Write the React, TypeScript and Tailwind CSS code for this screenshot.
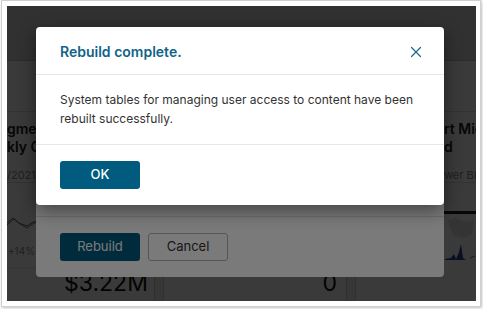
import React from "react";

const CloseIcon = () => (
  <svg width="12" height="12" viewBox="0 0 12 12" fill="none">
    <path d="M1.5 1.5l9 9M10.5 1.5l-9 9" stroke="#15688e" strokeWidth="1.2" strokeLinecap="round" />
  </svg>
);

const Dashboard = () => {
  return (
    <div className="flex flex-col h-full">
      <div className="h-[55px] shrink-0 bg-[#d9d9d9] border-b border-[#bdbdbd]" />
      <div className="flex gap-2 flex-1 min-h-0">
        {/* left column */}
        <div className="w-[148px] shrink-0 flex flex-col">
          <div className="bg-white border-r border-[#d4d4d4] flex flex-col">
            <div className="h-[51px] border-b border-[#e2e2e2]" />
            <div className="pt-[8px] text-[14px] leading-[18px] font-semibold text-[#1d1d1d] whitespace-nowrap">
              <div>gment</div>
              <div>kly C</div>
            </div>
            <div className="h-[27px] pt-[13px] leading-[12px] border-b border-[#e2e2e2] text-[11px] text-[#8a8a8a] whitespace-nowrap">
              /2021
            </div>
            <div className="h-[62px]">
              <svg width="40" height="62" viewBox="0 0 40 62">
                <path d="M0 42 L7 36 L13 41 L20 45 L27 40 L34 39" stroke="#c8553d" strokeWidth="1" fill="none" />
                <path d="M0 40 L6 35 L12 40 L20 43 L26 39 L34 38" stroke="#3b6fb6" strokeWidth="1" fill="none" />
              </svg>
            </div>
            <div className="h-[22px] text-[10px] leading-[12px] text-[#8d8d8d] pl-[1px]">+14%</div>
          </div>
          <div className="mt-[2px] flex-1 bg-white border-r border-[#d4d4d4] pl-[57px] pt-[1px]">
            <div className="text-[23px] leading-[26px] text-[#111]">$3.22M</div>
          </div>
        </div>
        {/* middle column */}
        <div className="w-[184px] shrink-0 flex flex-col">
          <div className="h-[206px] bg-white" />
          <div className="mt-[2px] flex-1 bg-white border-l border-r border-[#d4d4d4] pr-[9px] pt-[1px] text-right">
            <div className="text-[23px] leading-[26px] text-[#111]">0</div>
          </div>
        </div>
        {/* right column */}
        <div className="flex-1 min-w-0 overflow-hidden flex flex-col bg-white border-l border-[#d4d4d4]">
          <div className="h-[51px] border-b border-[#e2e2e2]" />
          <div className="pt-[8px] pl-[88px] text-[14px] leading-[18px] font-semibold text-[#1d1d1d] whitespace-nowrap">
            <div>rt Mic</div>
            <div>d</div>
          </div>
          <div className="h-[27px] pt-[13px] pl-[88px] leading-[12px] border-b border-[#e2e2e2] text-[11px] text-[#8a8a8a] whitespace-nowrap">
            wer BI
          </div>
          <div className="h-[31px] border-b-[3px] border-[#222]" />
          <div className="h-[50px]">
            <svg width="121" height="50" viewBox="0 0 121 50">
              <path d="M92 6 L100 4 L110 8 L118 6 L116 20 L108 24 L98 22 L94 14 Z" fill="#e4e4e4" />
              <path d="M89 45 L95 44 L98 40 L100 45 L103 38 L105 30 L107 44 L110 46 L89 46 Z" fill="#2a3f9a" />
              <path d="M114 44 L119 42" stroke="#d04545" strokeWidth="1" />
            </svg>
          </div>
        </div>
      </div>
    </div>
  );
};

const RebuildDialog = () => (
  <div className="absolute left-[29px] top-[100px] w-[408px] h-[171px] bg-white rounded-[4px] flex flex-col justify-end">
    <div className="border-t border-[#e4e4e4] px-6 pt-[16px] pb-[16px] flex gap-2">
      <button className="w-[80px] h-[28px] rounded-[3px] bg-[#005b7f] text-white text-[13px]">Rebuild</button>
      <button className="w-[80px] h-[28px] rounded-[3px] border border-[#b5b5b5] bg-white text-[#333] text-[13px]">Cancel</button>
    </div>
  </div>
);

const CompleteDialog = () => (
  <div className="absolute left-[29px] top-[21px] w-[408px] h-[178px] bg-white rounded-[4px] shadow-[0_6px_18px_rgba(0,0,0,0.45)] flex flex-col">
    <div className="h-[48px] shrink-0 px-6 pt-[2px] flex items-center justify-between border-b border-[#e6e6e6]">
      <h2 className="text-[14px] font-semibold text-[#0f6488]">Rebuild complete.</h2>
      <button className="mr-[-6px] w-[20px] h-[20px] flex items-center justify-center">
        <CloseIcon />
      </button>
    </div>
    <div className="px-6 pt-[15px] pb-[16px] border-b border-[#e6e6e6] text-[12px] leading-[19px] text-[#333]">
      System tables for managing user access to content have been rebuilt successfully.
    </div>
    <div className="px-6 pt-[16px]">
      <button className="w-[80px] h-[28px] rounded-[3px] bg-[#005b7f] text-white text-[13px] font-medium">OK</button>
    </div>
  </div>
);

export default function App() {
  return (
    <div className="w-[483px] h-[309px] bg-white font-['Inter',sans-serif]">
      <div className="ml-[1px] w-[480px] h-[307px] border border-[#cfcfcf] pl-[5px] pt-[5px] shadow-[1px_1px_3px_rgba(0,0,0,0.25)]">
        <div className="relative w-[469px] h-[295px] overflow-hidden bg-[#f2f2f2]">
          <Dashboard />
          <div className="absolute inset-0 bg-black/[0.52]" />
          <RebuildDialog />
          <div className="absolute inset-0 bg-black/[0.52]" />
          <CompleteDialog />
        </div>
      </div>
    </div>
  );
}
